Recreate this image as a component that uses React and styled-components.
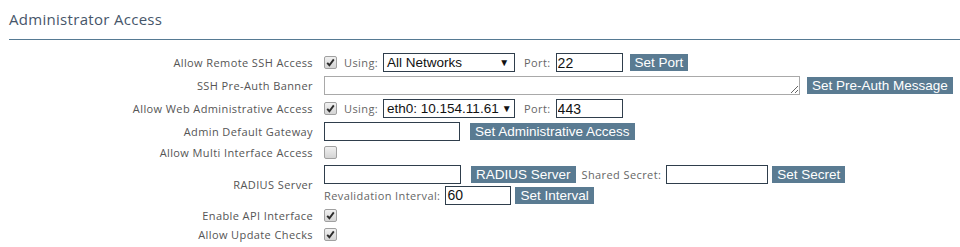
import styled, { createGlobalStyle } from 'styled-components';

const GlobalStyle = createGlobalStyle`
    body {
        margin: 0;
        background: #fff;
        font-family: "Open Sans", "Noto Sans", sans-serif;
    }
`;

function Check({ checked }) {
    return (
        <CheckBox>
            {checked && (
                <svg width="9" height="9" viewBox="0 0 9 9">
                    <path d="M1.2 4.8 L3.4 7.2 L7.8 1.4" fill="none" stroke="#2b2b2b" strokeWidth="1.9" />
                </svg>
            )}
        </CheckBox>
    );
}

function Select({ value }) {
    return (
        <SelectBox>
            <span>{value}</span>
            <Arrow>▼</Arrow>
        </SelectBox>
    );
}

function App() {
    return (
        <Page>
            <GlobalStyle />
            <Header>Administrator Access</Header>
            <Form>
                <Row h={23}>
                    <Label>Allow Remote SSH Access</Label>
                    <Controls>
                        <Check checked />
                        <Hint lead={7}>Using:</Hint>
                        <Select value="All Networks" />
                        <Hint>Port:</Hint>
                        <Input w={67} defaultValue="22" />
                        <Button>Set Port</Button>
                    </Controls>
                </Row>
                <Row h={23}>
                    <Label>SSH Pre-Auth Banner</Label>
                    <Controls>
                        <Banner rows={1} />
                        <Button>Set Pre-Auth Message</Button>
                    </Controls>
                </Row>
                <Row h={23}>
                    <Label>Allow Web Administrative Access</Label>
                    <Controls>
                        <Check checked />
                        <Hint lead={7}>Using:</Hint>
                        <Select value="eth0: 10.154.11.61" />
                        <Hint>Port:</Hint>
                        <Input w={67} defaultValue="443" />
                    </Controls>
                </Row>
                <Row h={22}>
                    <Label>Admin Default Gateway</Label>
                    <Controls>
                        <Input w={136} />
                        <Button gap={10}>Set Administrative Access</Button>
                    </Controls>
                </Row>
                <Row h={21}>
                    <Label>Allow Multi Interface Access</Label>
                    <Controls>
                        <Check />
                    </Controls>
                </Row>
                <Row h={43}>
                    <Label>RADIUS Server</Label>
                    <Stack>
                        <Controls>
                            <Input w={137} />
                            <Button gap={10}>RADIUS Server</Button>
                            <Hint>Shared Secret:</Hint>
                            <Input w={102} />
                            <Button gap={4}>Set Secret</Button>
                        </Controls>
                        <Controls>
                            <Hint lead={0}>Revalidation Interval:</Hint>
                            <Input w={66} defaultValue="60" />
                            <Button gap={4}>Set Interval</Button>
                        </Controls>
                    </Stack>
                </Row>
                <Row h={19}>
                    <Label>Enable API Interface</Label>
                    <Controls>
                        <Check checked />
                    </Controls>
                </Row>
                <Row h={19}>
                    <Label>Allow Update Checks</Label>
                    <Controls>
                        <Check checked />
                    </Controls>
                </Row>
            </Form>
        </Page>
    );
}

const Page = styled.div`
    width: 960px;
    height: 247px;
    overflow: hidden;
`;

const Header = styled.div`
    margin-left: 9px;
    padding-top: 9px;
    height: 30px;
    border-bottom: 1px solid #567a93;
    font-size: 15px;
    line-height: 20px;
    letter-spacing: 0.3px;
    color: #46566a;
`;

const Form = styled.div`
    padding-top: 11px;
`;

const Row = styled.div`
    display: flex;
    align-items: center;
    height: ${p => p.h}px;
`;

const Label = styled.div`
    width: 313px;
    flex-shrink: 0;
    text-align: right;
    font-size: 11px;
    letter-spacing: 0.4px;
    color: #555;
    padding-right: 11px;
    box-sizing: content-box;
`;

const Controls = styled.div`
    display: flex;
    align-items: center;
    height: 20px;
`;

const Stack = styled.div`
    display: flex;
    flex-direction: column;
    gap: 1px;
`;

const Hint = styled.span`
    font-size: 11px;
    letter-spacing: 0.4px;
    color: #666;
    margin-right: 5px;
    margin-left: ${p => p.lead ?? 6}px;
    white-space: nowrap;
`;

const CheckBox = styled.span`
    width: 11px;
    height: 11px;
    border: 1px solid #a0a0a0;
    border-radius: 2px;
    background: linear-gradient(#f0f0f0, #d4d4d4);
    display: inline-flex;
    align-items: center;
    justify-content: center;
`;

const SelectBox = styled.div`
    width: 122px;
    height: 17px;
    border: 1px solid #2f3e4c;
    padding: 0 5px 0 3px;
    display: flex;
    align-items: center;
    justify-content: space-between;
    gap: 3px;
    white-space: nowrap;
    overflow: hidden;
    font-family: "Liberation Sans", Arial, sans-serif;
    font-size: 13.5px;
    color: #111;
    margin-right: 3px;
`;

const Arrow = styled.span`
    font-size: 10px;
    color: #111;
`;

const Input = styled.input`
    width: ${p => p.w}px;
    height: 19px;
    box-sizing: border-box;
    border: 1px solid #2f3e4c;
    padding: 0 1px;
    font-family: "Liberation Sans", Arial, sans-serif;
    font-size: 14px;
    color: #111;
    outline: none;
`;

const Banner = styled.textarea`
    width: 476px;
    height: 19px;
    box-sizing: border-box;
    border: 1px solid #a9a9a9;
    padding: 0 2px;
    margin: 0;
    font-family: "Liberation Sans", Arial, sans-serif;
    font-size: 13px;
    display: block;
`;

const Button = styled.button`
    margin-left: ${p => p.gap ?? 7}px;
    background: #5a7b92;
    color: #fff;
    border: 0;
    height: 17px;
    padding: 0 5px;
    font-family: "Liberation Sans", Arial, sans-serif;
    font-size: 13.5px;
    line-height: 17px;
    white-space: nowrap;
`;

export default App;
